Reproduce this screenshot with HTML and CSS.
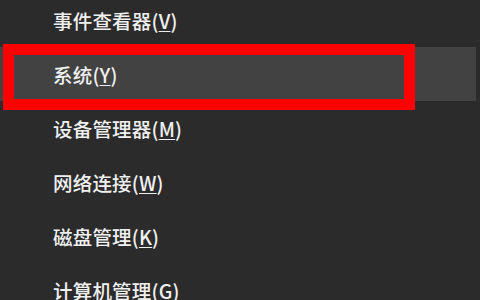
FILE: index.html
```html
<!DOCTYPE html>
<html lang="zh-CN">
<head>
<meta charset="utf-8">
<link rel="stylesheet" href="styles.css">
</head>
<body>
<div class="menu">
  <div class="item"><span class="label">事件查看器(<u>V</u>)</span></div>
  <div class="item active"><span class="label">系统(<u>Y</u>)</span></div>
  <div class="item"><span class="label">设备管理器(<u>M</u>)</span></div>
  <div class="item"><span class="label">网络连接(<u>W</u>)</span></div>
  <div class="item"><span class="label">磁盘管理(<u>K</u>)</span></div>
  <div class="item"><span class="label">计算机管理(<u>G</u>)</span></div>
</div>
<div class="mark"></div>
</body>
</html>
```
FILE: styles.css
```css
html, body {
  margin: 0;
  padding: 0;
  width: 480px;
  height: 300px;
  overflow: hidden;
  background: #2b2b2b;
}
body {
  position: relative;
  font-family: "Noto Sans CJK SC", "Noto Sans", sans-serif;
  color: #f0f0f0;
}
.menu {
  margin-top: -7px;
  width: 476px;
  display: flex;
  flex-direction: column;
}
.item {
  height: 54px;
  display: flex;
  align-items: center;
  padding-left: 53px;
  font-size: 19.5px;
  font-weight: 500;
  letter-spacing: 0.2px;
}
.item u {
  text-decoration-thickness: 1px;
  text-underline-offset: 2px;
}
.item.active {
  background: #424242;
}
.mark {
  position: absolute;
  left: 3px;
  top: 44px;
  width: 390px;
  height: 44px;
  border: 11px solid #ff0000;
  filter: blur(0.7px);
}
```
